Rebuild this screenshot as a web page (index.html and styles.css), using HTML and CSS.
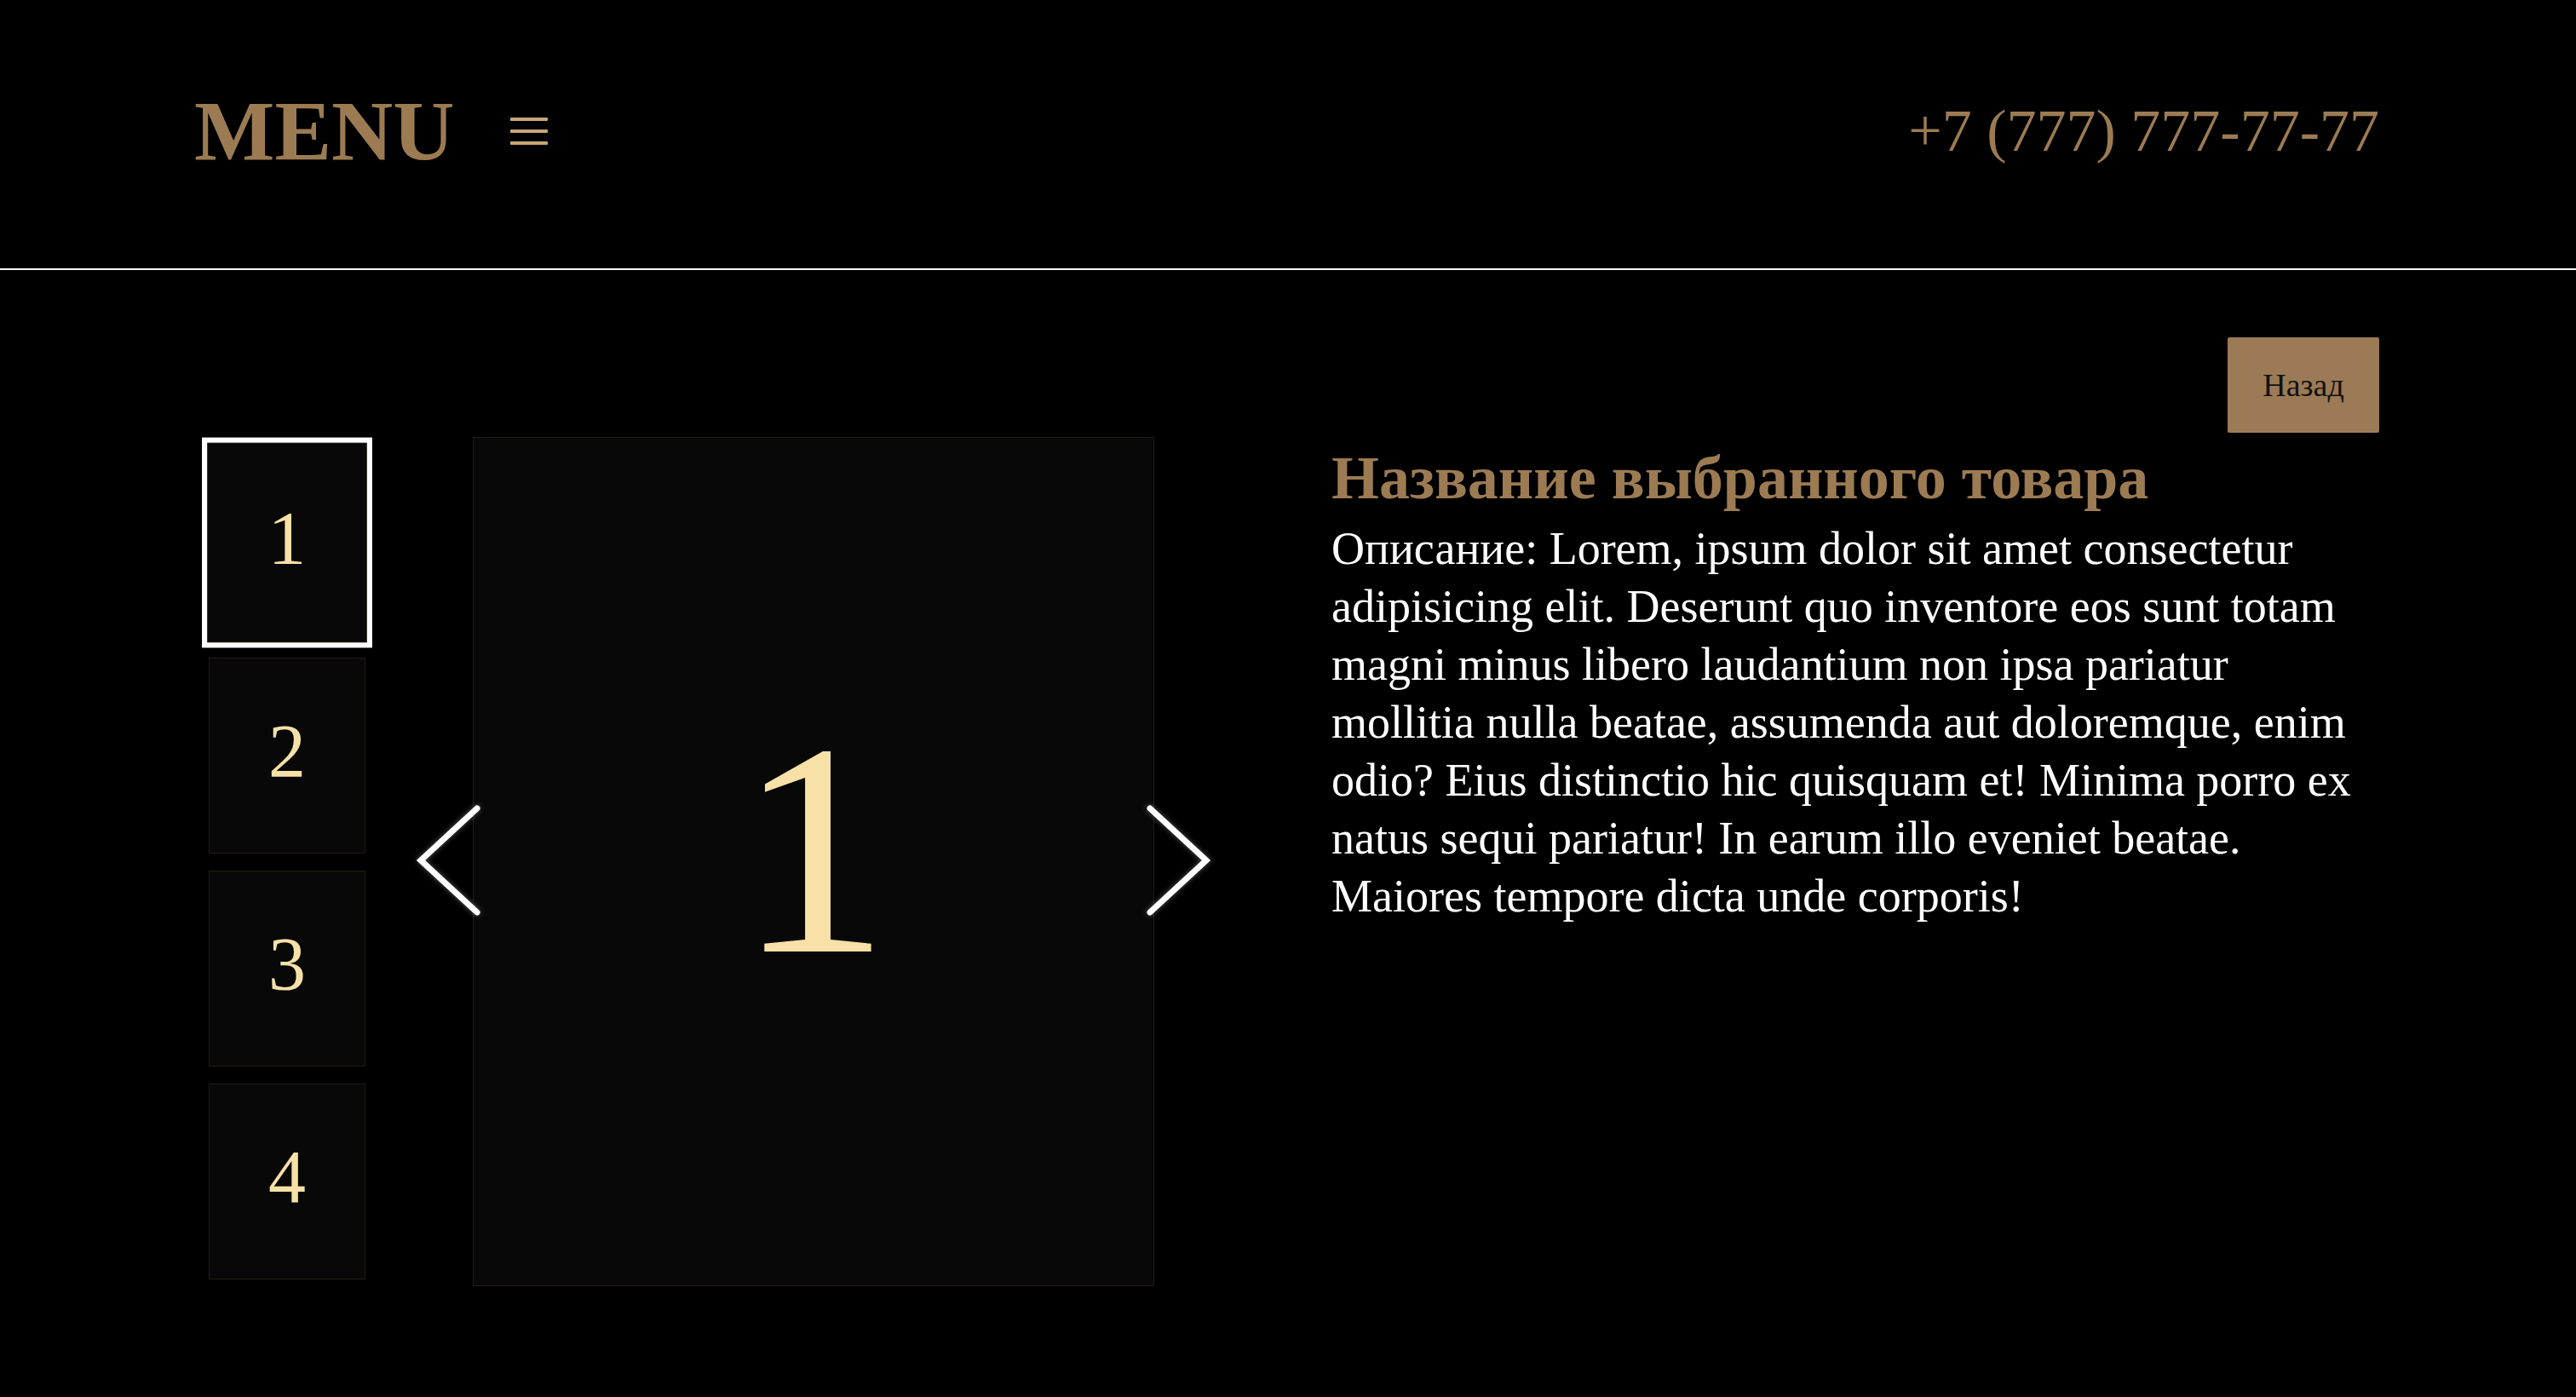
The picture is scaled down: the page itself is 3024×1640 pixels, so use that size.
FILE: index.html
```html
<!DOCTYPE html>
<html lang="ru">
<head>
<meta charset="utf-8">
<title>Товар</title>
<link rel="stylesheet" href="styles.css">
</head>
<body>
<header class="header">
  <div class="header-left">
    <span class="logo">MENU</span>
    <button class="burger" aria-label="Меню">
      <span></span><span></span><span></span>
    </button>
  </div>
  <a class="phone" href="#">+7 (777) 777-77-77</a>
</header>
<main class="product">
  <div class="back-row">
    <button class="back-btn">Назад</button>
  </div>
  <div class="product-body">
    <div class="gallery">
      <div class="thumbs">
        <div class="thumb active">1</div>
        <div class="thumb">2</div>
        <div class="thumb">3</div>
        <div class="thumb">4</div>
      </div>
      <div class="viewer">
        <span class="viewer-num">1</span>
        <svg class="arrow arrow-left" viewBox="0 0 80 136" width="80" height="136"><polyline points="74,5 8,66 74,127"/></svg>
        <svg class="arrow arrow-right" viewBox="0 0 80 136" width="80" height="136"><polyline points="6,5 72,66 6,127"/></svg>
      </div>
    </div>
    <div class="info">
      <h1 class="title">Название выбранного товара</h1>
      <p class="desc">Описание: Lorem, ipsum dolor sit amet consectetur adipisicing elit. Deserunt quo inventore eos sunt totam magni minus libero laudantium non ipsa pariatur mollitia nulla beatae, assumenda aut doloremque, enim odio? Eius distinctio hic quisquam et! Minima porro ex natus sequi pariatur! In earum illo eveniet beatae. Maiores tempore dicta unde corporis!</p>
    </div>
  </div>
</main>
</body>
</html>
```
FILE: styles.css
```css
* { box-sizing: border-box; }
html, body { margin: 0; padding: 0; }
body {
  background: #000;
  color: #fff;
  font-family: "Liberation Serif", "Times New Roman", serif;
  width: 3024px;
  min-height: 1640px;
}
.header {
  height: 317px;
  padding: 0 231px 8px 228px;
  border-bottom: 2px solid #fff;
  display: flex;
  align-items: center;
  justify-content: space-between;
}
.header-left {
  display: flex;
  align-items: center;
  gap: 65px;
}
.logo {
  font-size: 100px;
  line-height: 1;
  font-weight: 700;
  color: #9c7b53;
}
.burger {
  width: 44px;
  height: 32px;
  padding: 0;
  border: 0;
  background: none;
  display: flex;
  flex-direction: column;
  justify-content: space-between;
  cursor: pointer;
}
.burger span {
  display: block;
  height: 4px;
  width: 100%;
  border-radius: 1px;
  background: #c9a677;
}
.phone {
  font-size: 70px;
  line-height: 1;
  color: #9c7b53;
  text-decoration: none;
}
.product {
  padding: 79px 231px 0 230px;
  display: flex;
  flex-direction: column;
}
.back-row {
  display: flex;
  justify-content: flex-end;
}
.back-btn {
  width: 178px;
  height: 112px;
  border: 0;
  border-radius: 2px;
  background: #9b7a55;
  color: #111;
  font-family: "Liberation Serif", "Times New Roman", serif;
  font-size: 38px;
  cursor: pointer;
}
.product-body {
  margin-top: 5px;
  display: flex;
  align-items: flex-start;
}
.gallery {
  display: flex;
  align-items: center;
  gap: 126px;
  margin-left: 15px;
}
.thumbs {
  display: flex;
  flex-direction: column;
  gap: 20px;
}
.thumb {
  width: 184px;
  height: 230px;
  padding-bottom: 10px;
  border: 1px solid #221a10;
  background: #080808;
  color: #f8e1a7;
  font-size: 88px;
  display: flex;
  align-items: center;
  justify-content: center;
  line-height: 1;
}
.thumb.active {
  outline: 6px solid #fff;
  transform: scale(1.02);
}
.viewer {
  position: relative;
  width: 800px;
  height: 997px;
  border: 1px solid #241b10;
  background: #080808;
  display: flex;
  align-items: center;
  justify-content: center;
}
.viewer-num {
  font-size: 356px;
  line-height: 1;
  margin-bottom: 30px;
  color: #f8e1a7;
}
.arrow {
  position: absolute;
  top: 50%;
  transform: translateY(-50%);
  fill: none;
  stroke: #fff;
  stroke-width: 7;
  stroke-linecap: round;
  stroke-linejoin: miter;
  filter: drop-shadow(0 0 3px rgba(255,255,255,0.35));
}
.arrow-left { left: -70px; }
.arrow-right { right: -70px; }
.info {
  margin-left: 208px;
  flex: 1;
  padding-top: 9px;
}
.title {
  margin: 0;
  font-size: 72px;
  line-height: 1.1;
  font-weight: 700;
  color: #9c7b53;
}
.desc {
  margin: 9px 0 0;
  max-width: 1215px;
  font-size: 54px;
  line-height: 68px;
  color: #fff;
}
```
